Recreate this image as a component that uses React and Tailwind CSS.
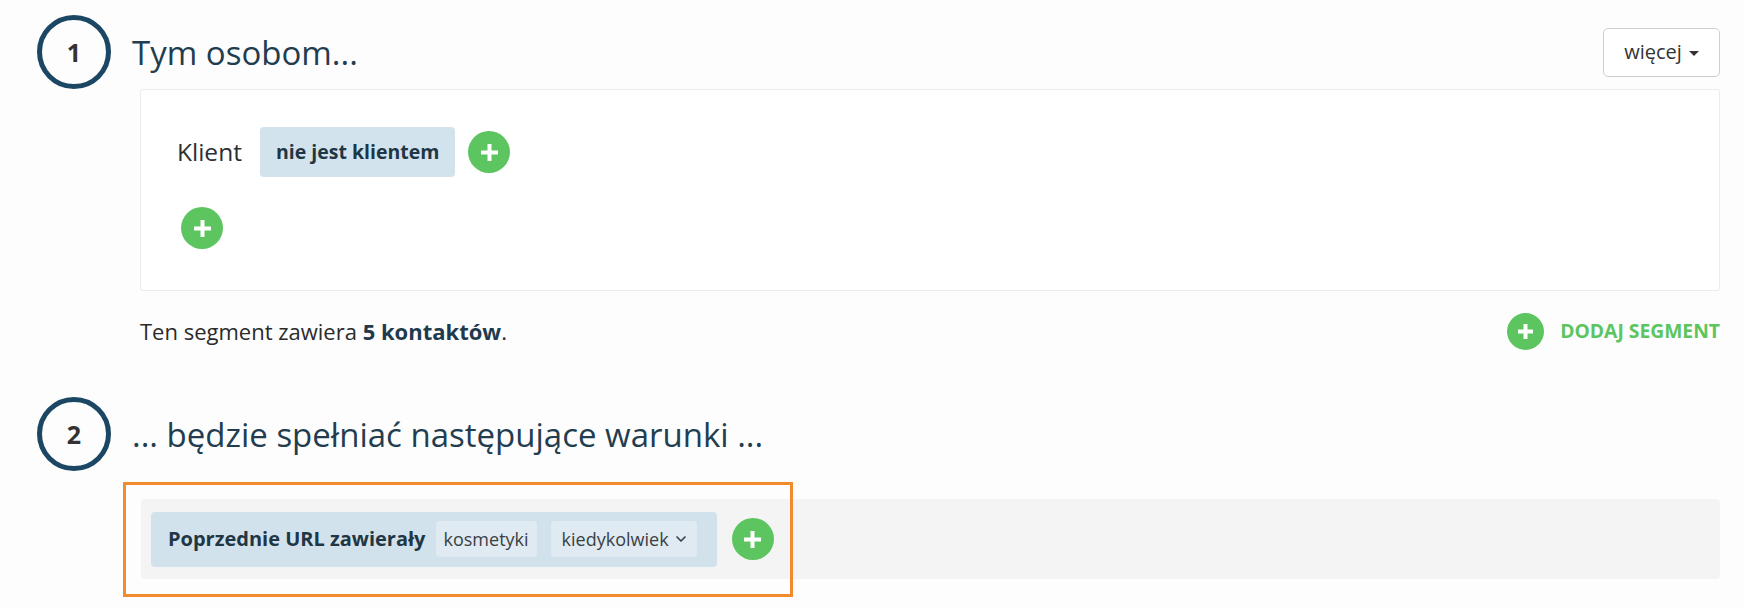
import { ChevronDown } from "lucide-react";

const FONT = { fontFamily: '"Open Sans", "Noto Sans", sans-serif' };

function StepCircle({ n }) {
  return (
    <div className="w-[74px] h-[74px] shrink-0 rounded-full border-[5px] border-[#1c4764] flex items-center justify-center">
      <span className="text-[25px] font-bold text-[#333] leading-none">{n}</span>
    </div>
  );
}

function PlusButton({ size = 42, arm = 17 }) {
  const c = arm / 2;
  return (
    <button
      className="shrink-0 rounded-full bg-[#5cc560] flex items-center justify-center"
      style={{ width: size, height: size }}
    >
      <svg width={arm} height={arm} viewBox={`0 0 ${arm} ${arm}`}>
        <line x1={c} y1="0" x2={c} y2={arm} stroke="white" strokeWidth="4" />
        <line x1="0" y1={c} x2={arm} y2={c} stroke="white" strokeWidth="4" />
      </svg>
    </button>
  );
}

export default function App() {
  return (
    <div className="w-full h-[608px] bg-[#fdfdfd] pl-[37px] pr-[24px] pt-[15px]" style={FONT}>
      {/* step 1 header */}
      <div className="flex items-center">
        <StepCircle n="1" />
        <h2 className="ml-[21px] text-[33px] text-[#233d50] leading-none">Tym osobom...</h2>
        <button className="ml-auto h-[49px] w-[117px] rounded-[5px] border border-[#cfcfcf] bg-white flex items-center justify-center gap-[7px] text-[20px] text-[#333]">
          więcej
          <span className="w-0 h-0 border-l-[5px] border-r-[5px] border-t-[5px] border-l-transparent border-r-transparent border-t-[#333] mt-[2px]" />
        </button>
      </div>

      {/* segment card */}
      <div className="ml-[103px] h-[202px] rounded-[3px] border border-[#ececec] bg-white pt-[37px] pl-[36px]">
        <div className="flex items-center h-[50px]">
          <span className="text-[24.5px] text-[#2a2f33]">Klient</span>
          <span className="ml-[18px] h-[50px] px-[16px] rounded-[4px] bg-[#d3e3ed] flex items-center text-[19.5px] font-bold text-[#1f3645]">
            nie jest klientem
          </span>
          <div className="ml-[13px]">
            <PlusButton />
          </div>
        </div>
        <div className="mt-[30px] ml-[4px]">
          <PlusButton />
        </div>
      </div>

      {/* summary row */}
      <div className="ml-[103px] mt-[20px] h-[40px] flex items-center">
        <p className="text-[22px] text-[#2a2a2a]">
          Ten segment zawiera <span className="font-bold text-[#1f3a4d]">5 kontaktów</span>.
        </p>
        <div className="ml-auto flex items-center gap-[16px]">
          <PlusButton size={37} arm={15} />
          <span className="text-[19.3px] font-bold text-[#5cc560] uppercase">Dodaj segment</span>
        </div>
      </div>

      {/* step 2 header */}
      <div className="flex items-center mt-[46px]">
        <StepCircle n="2" />
        <h2 className="ml-[21px] text-[33px] text-[#233d50] leading-none">... będzie spełniać następujące warunki ...</h2>
      </div>

      {/* conditions */}
      <div className="relative ml-[104px] mt-[28px]">
        <div className="h-[80px] rounded-[4px] bg-[#f4f4f4] pl-[10px] flex items-center">
          <div className="h-[55px] rounded-[4px] bg-[#d2e2ec] pl-[17px] pr-[20px] flex items-center">
            <span className="text-[20px] font-bold text-[#1f3645]">Poprzednie URL zawierały</span>
            <span className="ml-[10px] h-[36px] px-[8px] rounded-[4px] bg-[#dfeaf2] flex items-center text-[18px] text-[#3a3f44]">
              kosmetyki
            </span>
            <span className="ml-[14px] h-[36px] pl-[11px] pr-[8px] rounded-[4px] bg-[#dfeaf2] flex items-center gap-[4px] text-[18px] text-[#3a3f44]">
              kiedykolwiek
              <ChevronDown size={16} strokeWidth={2.5} className="text-[#3a3f44]" />
            </span>
          </div>
          <div className="ml-[15px]">
            <PlusButton />
          </div>
        </div>
        <div className="absolute left-[-18px] top-[-17px] w-[670px] h-[115px] border-[3px] border-[#f28a2e] pointer-events-none" />
      </div>
    </div>
  );
}
